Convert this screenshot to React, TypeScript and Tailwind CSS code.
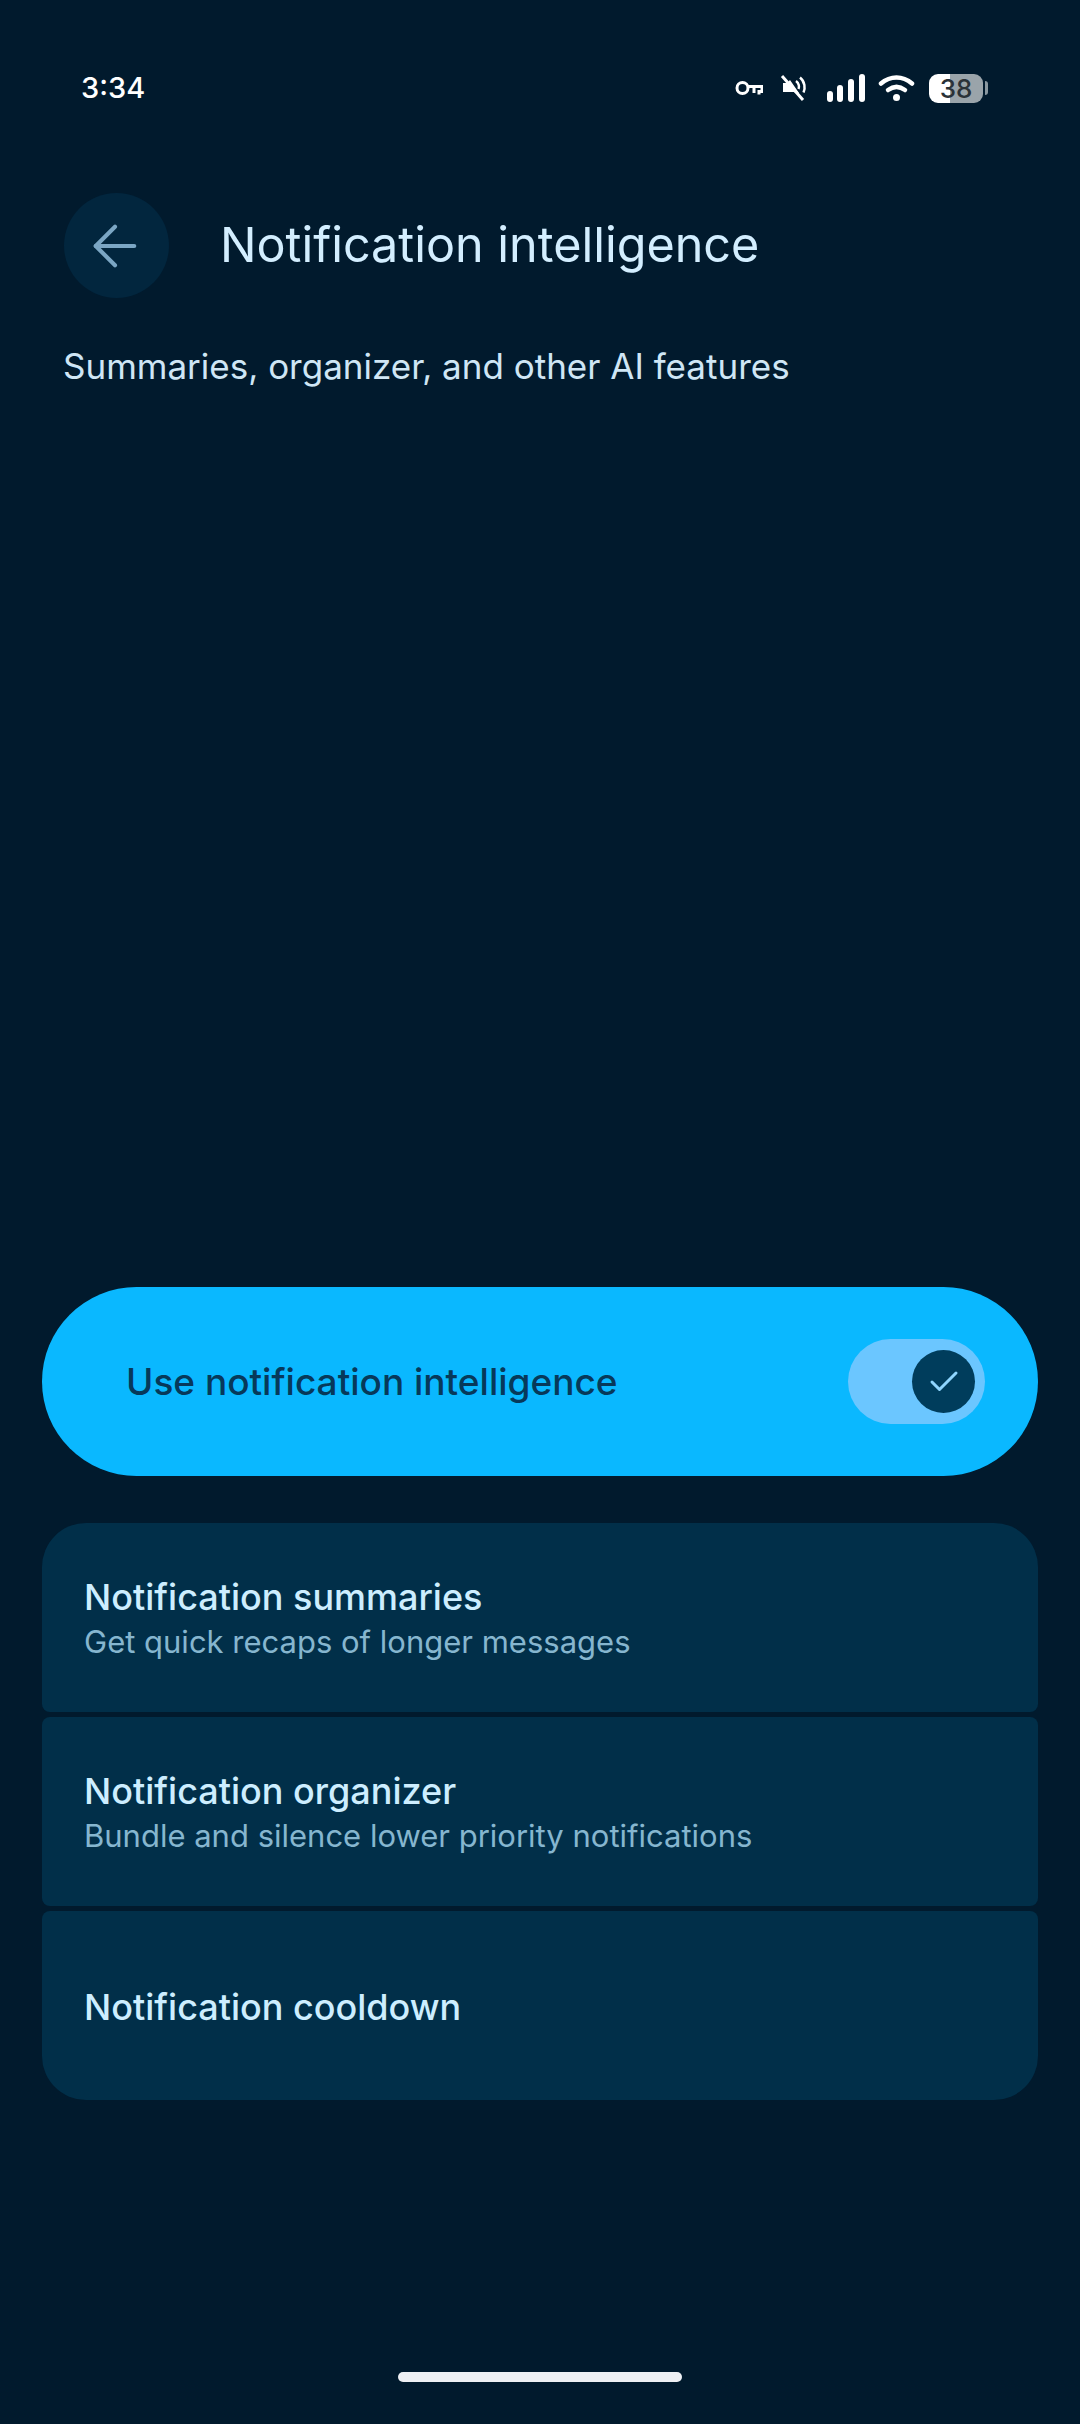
import { ArrowLeft, Check } from 'lucide-react';

function StatusIcons() {
  return (
    <div className="flex items-center text-white">
      {/* vpn key */}
      <svg width="28" height="16" viewBox="0 0 28 16" fill="none" stroke="currentColor" strokeWidth="3">
        <circle cx="7.5" cy="8" r="5.5" />
        <path d="M13 6.5h14v5h-3v3M19 8v5" />
      </svg>
      {/* muted speaker */}
      <svg className="ml-[17px]" width="27" height="26" viewBox="0 0 27 26" fill="none" stroke="currentColor">
        <path d="M3 8h4l3-3 9 13v3l-5-4H3z" fill="currentColor" stroke="none" />
        <path d="M2 1l21 24" strokeWidth="3" />
        <path d="M16 6c3 2 3.500 6 2.500 8M20 2.500c5 4 5.500 11 3.500 15" strokeWidth="2.500" />
      </svg>
      {/* signal */}
      <svg className="ml-[20px]" width="38" height="28" viewBox="0 0 38 28" fill="currentColor">
        <rect x="0" y="17" width="6" height="11" rx="3" />
        <rect x="10" y="11" width="6" height="17" rx="3" />
        <rect x="21" y="5" width="6" height="23" rx="3" />
        <rect x="32" y="0" width="6" height="28" rx="3" />
      </svg>
      {/* wifi */}
      <svg className="ml-[13px]" width="37" height="26" viewBox="0 0 37 26" fill="none" stroke="currentColor" strokeWidth="4.500" strokeLinecap="round">
        <path d="M3 8.500c9.500-8 21.500-8 31 0" />
        <path d="M10 15c5.500-4 11.500-4 17 0" />
        <circle cx="18.500" cy="22.500" r="3.500" fill="currentColor" stroke="none" />
      </svg>
      <div className="ml-[14px] flex items-center">
        <div className="flex h-[29px] w-[54px] items-center justify-center rounded-[9px] bg-[linear-gradient(90deg,#ffffff_38%,#9aa4aa_38%)] text-[26px] font-medium text-[#2a3238]">
          38
        </div>
        <div className="ml-[2px] h-[14px] w-[3px] rounded-r bg-[#8a98a0]" />
      </div>
    </div>
  );
}

function Row({ title, sub, rounded }: { title: string; sub?: string; rounded: string }) {
  return (
    <div className={`flex h-[189px] flex-col justify-center bg-[#012f49] px-[42px] pt-[3px] ${rounded}`}>
      <div className="text-[36px] leading-[44px] font-medium text-[#cdeeff]">{title}</div>
      {sub && <div className="text-[31px] leading-[45px] text-[#86b6cf]">{sub}</div>}
    </div>
  );
}

export default function App() {
  return (
    <div className="flex h-[2424px] w-[1080px] flex-col bg-[#011a2d] font-['Inter','Roboto',sans-serif]">
      <div className="mt-[60px] flex h-[56px] items-center justify-between pr-[92px] pl-[81px]">
        <span className="text-[29px] font-medium text-white">3:34</span>
        <StatusIcons />
      </div>

      <div className="mt-[77px] flex items-center pl-[64px]">
        <div className="flex h-[105px] w-[105px] items-center justify-center rounded-full bg-[#02263e]">
          <ArrowLeft size={66} strokeWidth={1.5} className="-ml-[4px] text-[#7ba6c4]" />
        </div>
        <h1 className="ml-[51px] text-[48.500px] font-normal text-[#d3eeff]">Notification intelligence</h1>
      </div>
      <p className="mt-[47px] pl-[63px] text-[35px] leading-[42px] text-[#cfe6f5]">Summaries, organizer, and other AI features</p>

      <div className="mx-[42px] mt-[900px] flex h-[189px] items-center justify-between rounded-full bg-[#0ab8ff] pr-[53px] pl-[84px]">
        <span className="text-[37px] font-medium text-[#07395a]">Use notification intelligence</span>
        <div className="flex h-[85px] w-[137px] items-center justify-end rounded-full bg-[#6bc6ff] pr-[10px]">
          <div className="flex h-[63px] w-[63px] items-center justify-center rounded-full bg-[#003d5c]">
            <Check size={36} strokeWidth={2} className="text-[#8fd6ff]" />
          </div>
        </div>
      </div>

      <div className="mx-[42px] mt-[47px] flex flex-col gap-[5px]">
        <Row title="Notification summaries" sub="Get quick recaps of longer messages" rounded="rounded-t-[44px] rounded-b-[8px]" />
        <Row title="Notification organizer" sub="Bundle and silence lower priority notifications" rounded="rounded-[8px]" />
        <Row title="Notification cooldown" rounded="rounded-b-[44px] rounded-t-[8px]" />
      </div>

      <div className="mt-auto mb-[42px] flex justify-center">
        <div className="h-[10px] w-[284px] rounded-full bg-[#eef0f4]" />
      </div>
    </div>
  );
}
